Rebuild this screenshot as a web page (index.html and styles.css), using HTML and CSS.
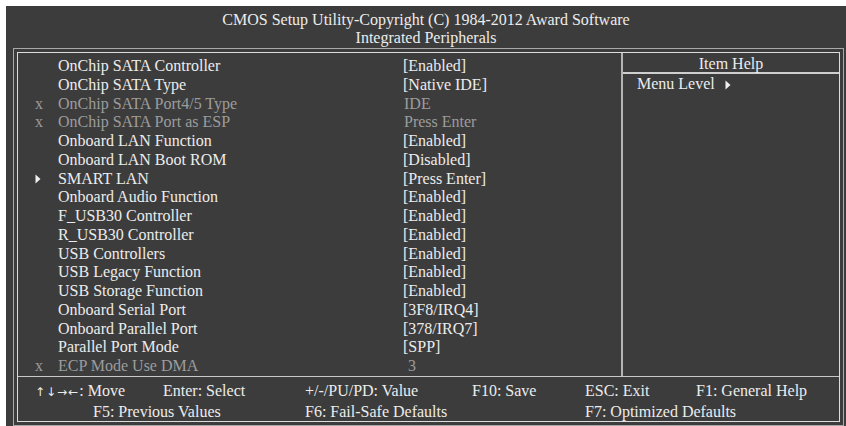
FILE: index.html
```html
<!DOCTYPE html>
<html lang="en">
<head>
  <meta charset="UTF-8">
  <title>CMOS Setup Utility - Integrated Peripherals</title>
  <link rel="stylesheet" href="styles.css">
</head>
<body>
  <div class="screen">
    <div class="title">
      <div>CMOS Setup Utility-Copyright (C) 1984-2012 Award Software</div>
      <div>Integrated Peripherals</div>
    </div>

    <div class="frame">
      <div class="inner">
        <div class="main">
          <div class="items">
            <div class="row"><span class="mark"></span><span class="label">OnChip SATA Controller</span><span class="value">[Enabled]</span></div>
            <div class="row"><span class="mark"></span><span class="label">OnChip SATA Type</span><span class="value">[Native IDE]</span></div>
            <div class="row off"><span class="mark">x</span><span class="label">OnChip SATA Port4/5 Type</span><span class="value">IDE</span></div>
            <div class="row off"><span class="mark">x</span><span class="label">OnChip SATA Port as ESP</span><span class="value">Press Enter</span></div>
            <div class="row"><span class="mark"></span><span class="label">Onboard LAN Function</span><span class="value">[Enabled]</span></div>
            <div class="row"><span class="mark"></span><span class="label">Onboard LAN Boot ROM</span><span class="value">[Disabled]</span></div>
            <div class="row"><span class="mark"><svg class="tri" width="6" height="10" viewBox="0 0 6 10"><path d="M0.5 0.5 L5.5 5 L0.5 9.5 Z" fill="#f0f0f0"/></svg></span><span class="label">SMART LAN</span><span class="value">[Press Enter]</span></div>
            <div class="row"><span class="mark"></span><span class="label">Onboard Audio Function</span><span class="value">[Enabled]</span></div>
            <div class="row"><span class="mark"></span><span class="label">F_USB30 Controller</span><span class="value">[Enabled]</span></div>
            <div class="row"><span class="mark"></span><span class="label">R_USB30 Controller</span><span class="value">[Enabled]</span></div>
            <div class="row"><span class="mark"></span><span class="label">USB Controllers</span><span class="value">[Enabled]</span></div>
            <div class="row"><span class="mark"></span><span class="label">USB Legacy Function</span><span class="value">[Enabled]</span></div>
            <div class="row"><span class="mark"></span><span class="label">USB Storage Function</span><span class="value">[Enabled]</span></div>
            <div class="row"><span class="mark"></span><span class="label">Onboard Serial Port</span><span class="value">[3F8/IRQ4]</span></div>
            <div class="row"><span class="mark"></span><span class="label">Onboard Parallel Port</span><span class="value">[378/IRQ7]</span></div>
            <div class="row"><span class="mark"></span><span class="label">Parallel Port Mode</span><span class="value">[SPP]</span></div>
            <div class="row off"><span class="mark">x</span><span class="label">ECP Mode Use DMA</span><span class="value">&nbsp;3</span></div>
          </div>
          <div class="help">
            <div class="help-title">Item Help</div>
            <div class="help-body">Menu Level <svg class="tri" width="6" height="10" viewBox="0 0 6 10"><path d="M0.5 0.5 L5.5 5 L0.5 9.5 Z" fill="#f0f0f0"/></svg></div>
          </div>
        </div>

        <div class="keys">
          <span><span class="arrows">↑↓→←</span>: Move</span>
          <span>Enter: Select</span>
          <span>+/-/PU/PD: Value</span>
          <span>F10: Save</span>
          <span>ESC: Exit</span>
          <span>F1: General Help</span>
          <span class="k-f5">F5: Previous Values</span>
          <span class="k-f6">F6: Fail-Safe Defaults</span>
          <span class="k-f7">F7: Optimized Defaults</span>
        </div>
      </div>
    </div>
  </div>
</body>
</html>
```

FILE: styles.css
```css
body { margin: 0; background: #ffffff; font-family: "Liberation Serif", "Times New Roman", serif; font-size: 16px; color: #ececec; }
.screen { margin: 6px 0 0 6px; width: 840px; height: 420px; background: #3c3c3c; overflow: hidden; }
.title { height: 42px; box-sizing: border-box; padding-top: 5px; line-height: 18px; text-align: center; }
.frame { margin-left: 7px; width: 831px; height: 378px; box-sizing: border-box; border: 1px solid #a9a9a9; padding: 3px; }
.inner { height: 370px; box-sizing: border-box; border: 1px solid #dcdcdc; display: flex; flex-direction: column; }
.main { display: flex; height: 324px; border-bottom: 1px solid #c8c8c8; }
.items { width: 603px; padding-top: 4px; border-right: 2px solid #b4b4b4; }
.row { display: flex; line-height: 18.75px; height: 18.75px; white-space: nowrap; }
.row.off { color: #9c9c9c; }
.mark { width: 23px; padding-left: 17px; display: flex; align-items: center; }
.label { width: 345px; }
.row.off .value { padding-left: 1px; }
.help { flex: 1; }
.help-title { text-align: center; padding-top: 3px; line-height: 15px; height: 16px; border-bottom: 2px solid #cfcfcf; }
.help-body { padding: 1px 0 0 14px; line-height: 18px; }
.help-body .tri { margin-left: 6px; vertical-align: -1px; }
.keys { display: grid; grid-template-columns: 128px 142px 167px 113px 111px auto; padding: 4px 0 0 17px; line-height: 20px; white-space: nowrap; }
.arrows { font-family: "DejaVu Sans", sans-serif; font-size: 12px; letter-spacing: 1px; }
.k-f5 { grid-column: 1 / 3; padding-left: 58px; }
.k-f6 { grid-column: 3 / 5; }
.k-f7 { grid-column: 5 / 7; }
```
